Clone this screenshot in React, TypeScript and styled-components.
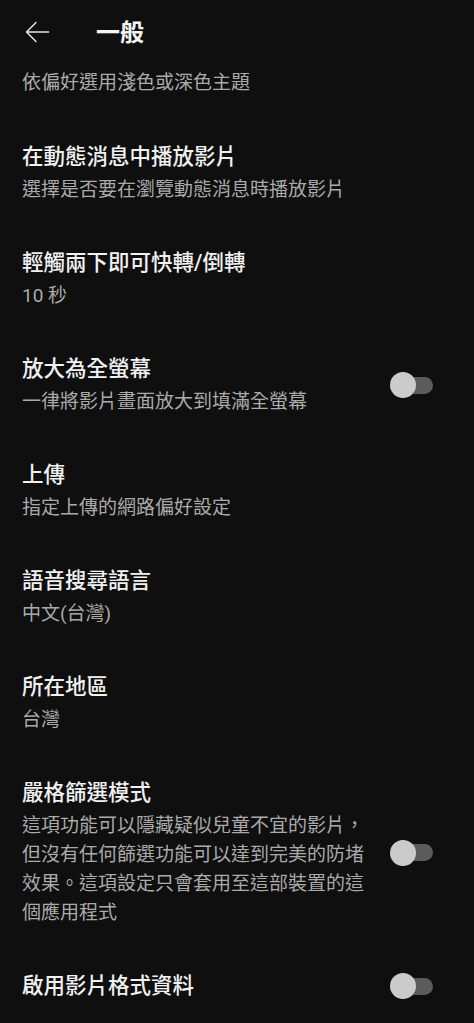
import React, { FC } from "react";
import styled, { createGlobalStyle } from "styled-components";

const GlobalStyle = createGlobalStyle`
  html, body {
    margin: 0;
    padding: 0;
    background: #0f0f0f;
  }
  body {
    font-family: Roboto, "Noto Sans CJK TC", "Noto Sans", sans-serif;
    -webkit-font-smoothing: antialiased;
  }
`;

interface SettingItem {
  title: string;
  desc?: string;
  toggle?: boolean;
}

const items: SettingItem[] = [
  { title: "在動態消息中播放影片", desc: "選擇是否要在瀏覽動態消息時播放影片" },
  { title: "輕觸兩下即可快轉/倒轉", desc: "10 秒" },
  { title: "放大為全螢幕", desc: "一律將影片畫面放大到填滿全螢幕", toggle: true },
  { title: "上傳", desc: "指定上傳的網路偏好設定" },
  { title: "語音搜尋語言", desc: "中文(台灣)" },
  { title: "所在地區", desc: "台灣" },
  {
    title: "嚴格篩選模式",
    desc: "這項功能可以隱藏疑似兒童不宜的影片，但沒有任何篩選功能可以達到完美的防堵效果。這項設定只會套用至這部裝置的這個應用程式",
    toggle: true,
  },
  { title: "啟用影片格式資料", toggle: true },
];

const Page = styled.div`
  width: 474px;
  min-height: 1023px;
  background: #0f0f0f;
  color: #f1f1f1;
  overflow: hidden;
`;

const Header = styled.header`
  height: 68px;
  display: flex;
  align-items: center;
  padding-left: 25px;
  gap: 46px;
`;

const BackButton = styled.div`
  width: 25px;
  height: 22px;
  display: flex;
  align-items: center;
  margin-top: -4px;
`;

const HeaderTitle = styled.h1`
  margin: 0;
  font-size: 24px;
  font-weight: 700;
  color: #f4f4f4;
  line-height: 32px;
  margin-top: -2px;
`;

const Intro = styled.div`
  padding: 0 22px 23px;
  font-size: 19px;
  line-height: 29px;
  color: #aaaaaa;
`;

const Row = styled.div`
  display: flex;
  align-items: center;
  gap: 18px;
  padding: 22px 41px 22px 22px;
`;

const TextBlock = styled.div`
  flex: 1;
  min-width: 0;
  display: flex;
  flex-direction: column;
  gap: 3px;
`;

const Title = styled.div`
  font-size: 21.5px;
  line-height: 30px;
  font-weight: 500;
  color: #f1f1f1;
`;

const Desc = styled.div`
  font-size: 19px;
  line-height: 29px;
  color: #aaaaaa;
  line-break: strict;
`;

const Switch = styled.div`
  position: relative;
  width: 43px;
  height: 26px;
  flex-shrink: 0;
  display: flex;
  align-items: center;
  justify-content: flex-end;
`;

const Track = styled.div`
  width: 37px;
  height: 17px;
  border-radius: 9px;
  background: #5b5b5b;
`;

const Thumb = styled.div`
  position: absolute;
  left: 0;
  top: 0;
  width: 26px;
  height: 26px;
  border-radius: 50%;
  background: #cbcbcb;
`;

const ArrowIcon: FC = () => (
  <svg width="25" height="22" viewBox="0 0 25 22" fill="none">
    <path
      d="M23.5 11H1.5M11 1.5L1.5 11L11 20.5"
      stroke="#e6e6e6"
      strokeWidth="1.5"
      strokeLinecap="round"
      strokeLinejoin="round"
    />
  </svg>
);

const Toggle: FC = () => (
  <Switch>
    <Track />
    <Thumb />
  </Switch>
);

const App: FC = () => {
  return (
    <Page>
      <GlobalStyle />
      <Header>
        <BackButton>
          <ArrowIcon />
        </BackButton>
        <HeaderTitle>一般</HeaderTitle>
      </Header>
      <Intro>依偏好選用淺色或深色主題</Intro>
      {items.map((item, idx) => (
        <Row key={idx}>
          <TextBlock>
            <Title>{item.title}</Title>
            {item.desc && <Desc>{item.desc}</Desc>}
          </TextBlock>
          {item.toggle && <Toggle />}
        </Row>
      ))}
    </Page>
  );
};

export default App;
